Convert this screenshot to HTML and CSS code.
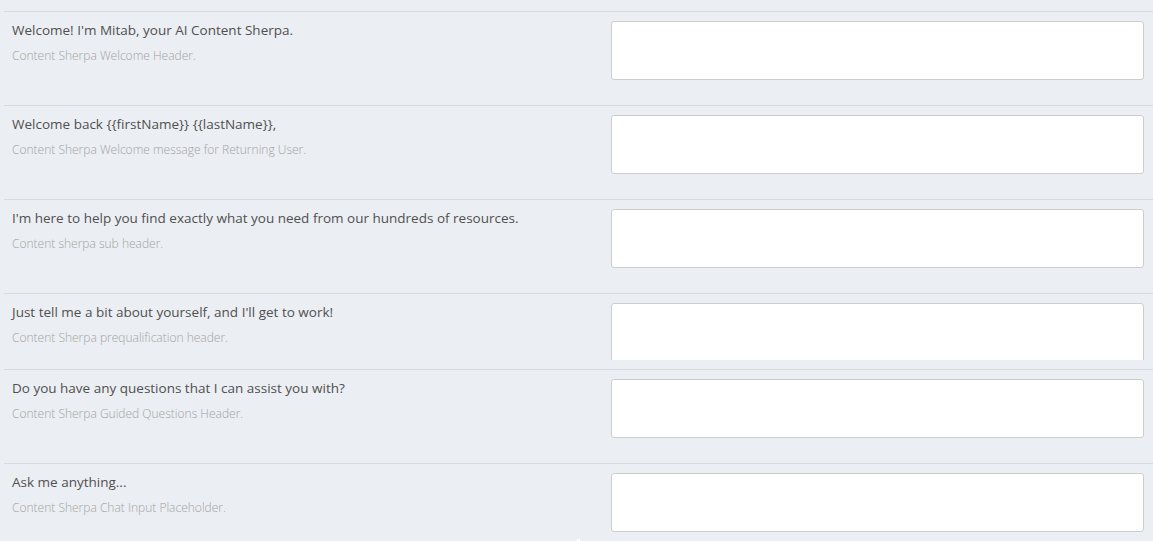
FILE: index.html
```html
<!DOCTYPE html>
<html lang="en">
<head>
<meta charset="utf-8">
<title>Content Sherpa Settings</title>
<link rel="stylesheet" href="styles.css">
</head>
<body>
<div class="list">
  <div class="row">
    <div class="label">
      <div class="title">Welcome! I'm Mitab, your AI Content Sherpa.</div>
      <div class="desc">Content Sherpa Welcome Header.</div>
    </div>
    <div class="field"><textarea class="input"></textarea></div>
  </div>
  <div class="row">
    <div class="label">
      <div class="title">Welcome back {{firstName}} {{lastName}},</div>
      <div class="desc">Content Sherpa Welcome message for Returning User.</div>
    </div>
    <div class="field"><textarea class="input"></textarea></div>
  </div>
  <div class="row">
    <div class="label">
      <div class="title">I'm here to help you find exactly what you need from our hundreds of resources.</div>
      <div class="desc">Content sherpa sub header.</div>
    </div>
    <div class="field"><textarea class="input"></textarea></div>
  </div>
  <div class="row row-short">
    <div class="label">
      <div class="title">Just tell me a bit about yourself, and I'll get to work!</div>
      <div class="desc">Content Sherpa prequalification header.</div>
    </div>
    <div class="field field-clipped"><textarea class="input"></textarea></div>
  </div>
  <div class="row">
    <div class="label">
      <div class="title">Do you have any questions that I can assist you with?</div>
      <div class="desc">Content Sherpa Guided Questions Header.</div>
    </div>
    <div class="field"><textarea class="input"></textarea></div>
  </div>
  <div class="row">
    <div class="label">
      <div class="title">Ask me anything...</div>
      <div class="desc">Content Sherpa Chat Input Placeholder.</div>
    </div>
    <div class="field"><textarea class="input"></textarea></div>
  </div>
</div>
<span class="tick"></span>
</body>
</html>
```

FILE: styles.css
```css
html, body {
  margin: 0;
  padding: 0;
  background: #ebeef2;
  height: 100%;
  overflow: hidden;
}
body {
  font-family: "Open Sans", "Noto Sans", "Liberation Sans", sans-serif;
  color: #505050;
  position: relative;
}
.list {
  padding-top: 11px;
  margin-left: 4px;
}
.row {
  display: grid;
  grid-template-columns: 1fr 533px;
  border-top: 1px solid #d8dce0;
  padding: 9px 9px 25px 8px;
}
.row-short {
  padding-bottom: 9px;
}
.label {
  padding-top: 0;
}
.title {
  font-size: 13.5px;
  line-height: 18px;
}
.desc {
  margin-top: 9px;
  font-size: 12px;
  line-height: 16px;
  font-weight: 300;
  color: #a3a3a3;
}
.field {
  height: 59px;
}
.field-clipped {
  height: 57px;
  overflow: hidden;
}
.input {
  display: block;
  box-sizing: border-box;
  width: 100%;
  height: 59px;
  margin: 0;
  border: 1px solid #cdcdcd;
  border-radius: 3px;
  background: #fff;
  resize: none;
  outline: none;
}
.tick {
  position: absolute;
  left: 577px;
  bottom: 0;
  width: 3px;
  height: 2px;
  background: #fff;
}
```
